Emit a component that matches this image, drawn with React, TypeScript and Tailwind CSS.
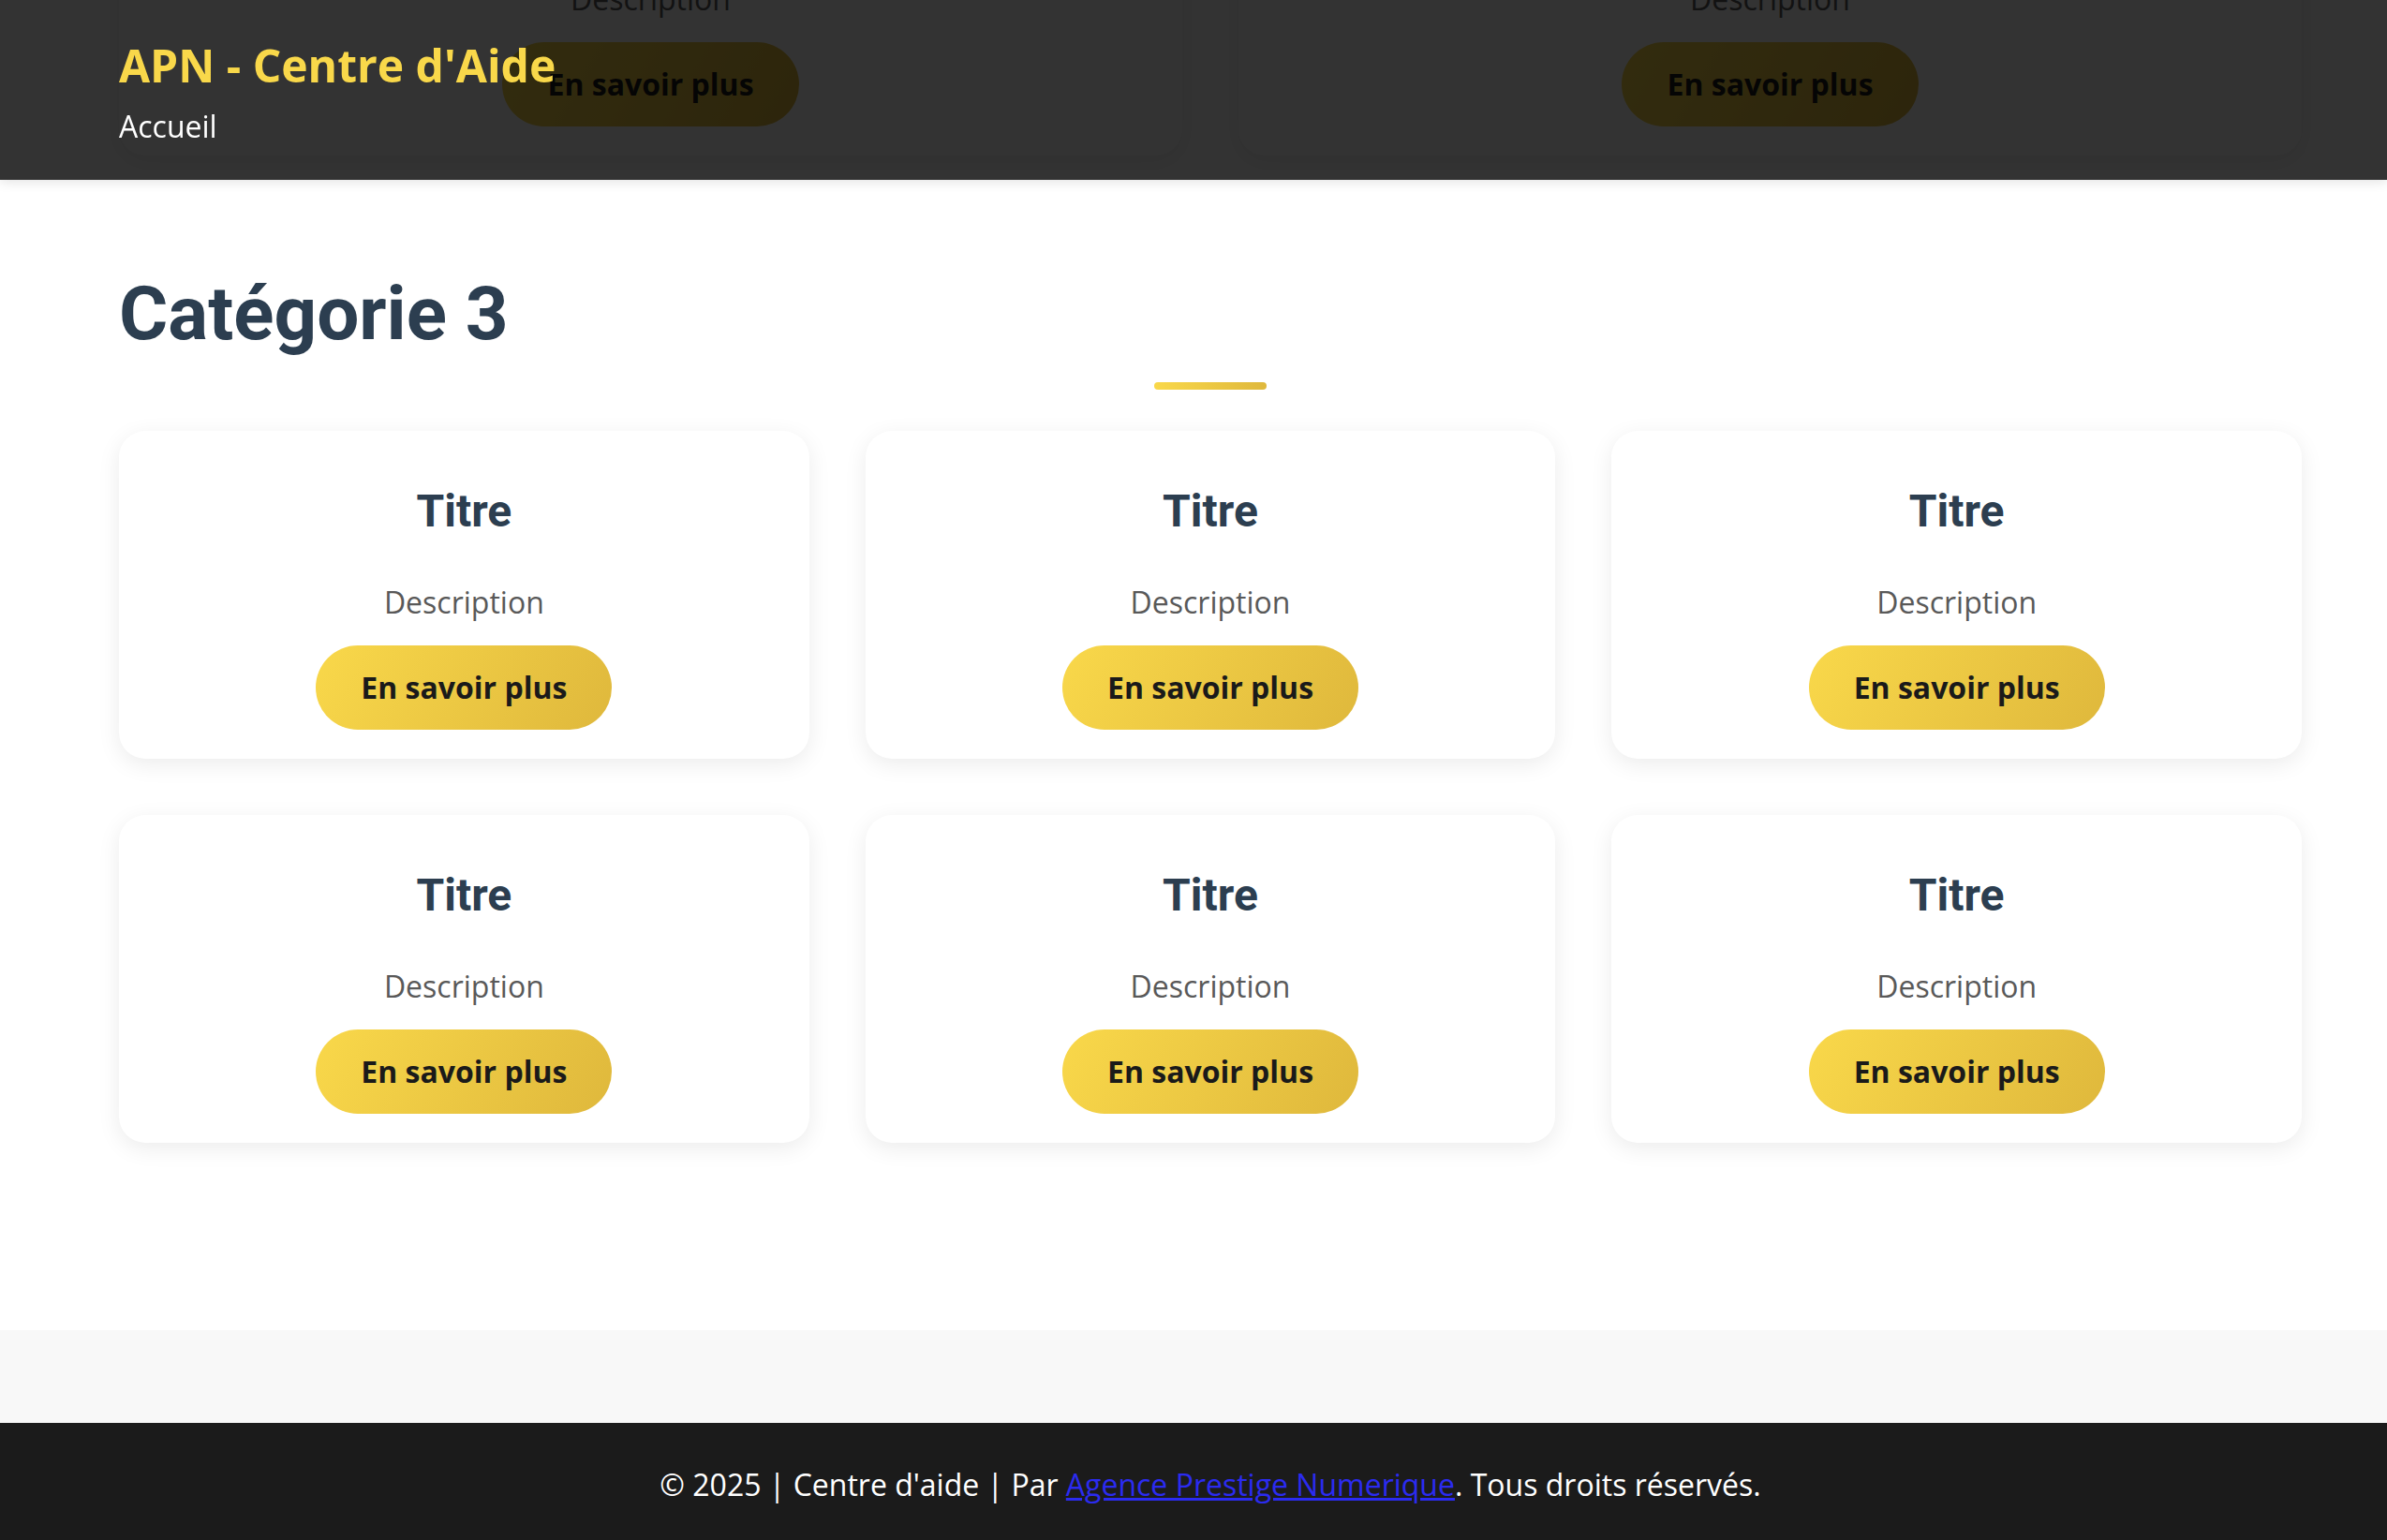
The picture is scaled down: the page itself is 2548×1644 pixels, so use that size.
import React from "react";

type cardData = {
  title: string;
  description: string;
};

const cards: cardData[] = [
  { title: "Titre", description: "Description" },
  { title: "Titre", description: "Description" },
  { title: "Titre", description: "Description" },
  { title: "Titre", description: "Description" },
  { title: "Titre", description: "Description" },
  { title: "Titre", description: "Description" },
];

const Card = ({ title, description }: cardData) => {
  return (
    <div className="flex flex-col items-center rounded-[28px] bg-white pt-[58px] pb-[31px] shadow-[0_6px_24px_rgba(0,0,0,0.08)]">
      <h3 className="font-['Roboto'] text-[48px] font-bold leading-[56px] text-[#2c3e50]">
        {title}
      </h3>
      <p className="mt-[45px] font-['Open_Sans'] text-[32px] leading-[48px] text-[#595959]">
        {description}
      </p>
      <button className="mt-[22px] rounded-full bg-[linear-gradient(120deg,#f9d84a,#dfb83c)] px-12 py-[21px] font-['Open_Sans'] text-[32px] font-bold leading-[48px] text-[#1a1a1a]">
        En savoir plus
      </button>
    </div>
  );
};

const App = () => {
  return (
    <div className="relative h-[1644px] overflow-hidden bg-[#f8f8f8] font-['Open_Sans',sans-serif]">
      {/* fixed header, the page is scrolled under it */}
      <header className="fixed inset-x-0 top-0 z-10 h-[192px] bg-black/80 pl-[127px] pt-[37px] shadow-[0_2px_12px_rgba(0,0,0,0.12)]">
        <h1 className="font-['Open_Sans'] text-[48px] font-bold leading-[65px] text-[#f9d84a]">
          APN - Centre d'Aide
        </h1>
        <nav className="mt-[11px]">
          <a className="font-['Open_Sans'] text-[32px] leading-[44px] text-white">
            Accueil
          </a>
        </nav>
      </header>

      <main className="bg-white">
        {/* end of the previous category */}
        <section className="-mt-[184px] pl-[127px] pr-[91px]">
          <div className="grid grid-cols-2 gap-[60px]">
            <Card title="Titre" description="Description" />
            <Card title="Titre" description="Description" />
          </div>
        </section>

        <section className="pl-[127px] pr-[91px] pt-[121px] pb-[200px]">
          <h2 className="font-['Roboto'] text-[80px] font-bold leading-[96px] text-[#2c3e50]">
            Catégorie 3
          </h2>
          <div className="mt-[25px] flex justify-center">
            <div className="h-2 w-[120px] rounded-full bg-[linear-gradient(90deg,#f9d84a,#dfb83c)]" />
          </div>
          <div className="mt-[44px] grid grid-cols-3 gap-[60px]">
            {cards.map((card, i) => (
              <Card key={i} title={card.title} description={card.description} />
            ))}
          </div>
        </section>
      </main>

      <div className="h-[99px] bg-[#f8f8f8]" />

      <footer className="bg-[#1b1b1b] pl-[127px] pr-[91px] py-[42px] text-center font-['Open_Sans'] text-[32px] leading-[48px] text-white">
        © 2025 | Centre d'aide | Par{" "}
        <a className="text-[#2b2bf0] underline">Agence Prestige Numerique</a>. Tous droits réservés.
      </footer>
    </div>
  );
};

export default App;
